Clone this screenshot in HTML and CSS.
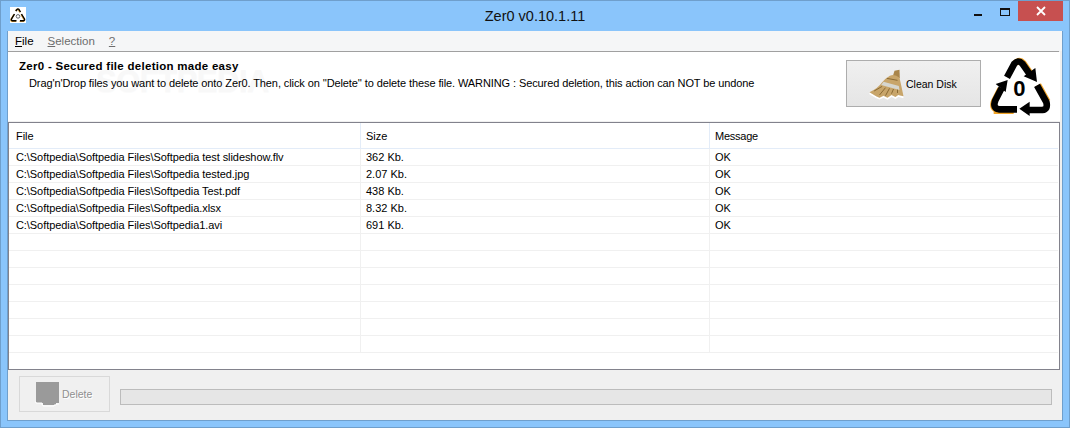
FILE: index.html
```html
<!DOCTYPE html>
<html lang="en">
<head>
<meta charset="utf-8">
<title>Zer0 v0.10.1.11</title>
<link rel="stylesheet" href="styles.css">
</head>
<body>
<div class="window">
  <div class="titlebar">
    <div class="title-left">
      <div class="app-icon">
        <svg width="16" height="16" viewBox="0 0 16 16">
          <path d="M6 3.5L7.2 2.2Q8 1.6 8.8 2.2L10.5 5M11.5 7L14.5 12Q15 13.6 13.5 13.8H10M6.5 13.8H2.5Q1 13.6 1.5 12L4.5 7" fill="none" stroke="#d89a30" stroke-width="1.6" transform="translate(-.4 .4)"/>
          <path d="M5.8 4L7.2 2.2Q8 1.6 8.8 2.2L10.5 5M11.5 7L14.5 12Q15 13.6 13.5 13.8H10M6.5 13.8H2.5Q1 13.6 1.5 12L4.5 7" fill="none" stroke="#000" stroke-width="1.4"/>
          <circle cx="8" cy="9.4" r="1.8" fill="none" stroke="#666" stroke-width="1"/>
        </svg>
      </div>
    </div>
    <div class="title">Zer0 v0.10.1.11</div>
    <div class="controls">
      <div class="ctl"><span class="min-glyph"></span></div>
      <div class="ctl"><span class="max-glyph"></span></div>
      <div class="ctl-close">
        <svg width="10" height="10" viewBox="0 0 10 10"><path d="M1 1L9 9M9 1L1 9" stroke="#fff" stroke-width="1.8"/></svg>
      </div>
    </div>
  </div>
  <div class="client">
    <div class="menubar">
      <span class="menu"><u>F</u>ile</span>
      <span class="menu disabled"><u>S</u>election</span>
      <span class="menu disabled"><u>?</u></span>
    </div>
    <div class="menu-line"></div>
    <div class="header">
      <div class="watermark">SOFTPEDIA</div>
      <div class="header-text">
        <div class="h-title">Zer0 - Secured file deletion made easy</div>
        <div class="h-sub">Drag'n'Drop files you want to delete onto Zer0. Then, click on ''Delete'' to delete these file. WARNING : Secured deletion, this action can NOT be undone</div>
      </div>
      <div class="clean-btn">
        <svg class="broom" width="37" height="32" viewBox="10 15 110 96">
          <path d="M14 91L34 103L44 107L56 101L68 107L80 99L92 105L100 99L116 103" fill="none" stroke="#fff" stroke-width="5"/>
          <path d="M84 40L89 23L104 20L105 46Z" fill="#a9854a"/>
          <path d="M75 38Q90 32 104 44Q110 70 116 100L100 96L92 102L80 96L68 104L56 98L44 104L34 100L14 88Q40 75 50 60Q62 45 75 38Z" fill="#c8a56a"/>
          <path d="M56 56L102 69L104 81L49 66Z" fill="#d6d6cf"/>
          <path d="M66 46L98 52M28 84L52 70M44 96L62 74M62 98L74 76M80 92L86 78M98 90L98 80" stroke="#8a6a34" stroke-width="3" fill="none"/>
        </svg>
        <span>Clean Disk</span>
      </div>
      <svg class="logo" width="72" height="68" viewBox="0 0 216 204">
        <g fill="none" stroke="#f0a428" stroke-width="20">
          <path d="M28 172H88" transform="translate(-2 4)"/>
          <path d="M42 170Q22 168 31 145L50 108" transform="translate(-3 2)"/>
          <path d="M88 35Q100 22 112 35L136 70" transform="translate(3 -1)"/>
          <path d="M156 100L184 150" transform="translate(3 -1)"/>
        </g>
        <g fill="none" stroke="#000" stroke-width="20">
          <path d="M66 76L88 35Q100 22 112 35L135 68"/>
          <path d="M156 100L184 150Q190 172 172 174H128"/>
          <path d="M96 172H42Q22 168 31 145L50 108"/>
        </g>
        <path d="M116 73L156 90L151 48Z M103 170L134 149V192Z M68 84L32 96L62 120Z" fill="#000"/>
        <text x="103" y="133" class="logo-zero">0</text>
      </svg>
    </div>
    <div class="table">
      <div class="row head"><div class="c1">File</div><div class="c2">Size</div><div class="c3">Message</div></div>
      <div class="row"><div class="c1">C:\Softpedia\Softpedia Files\Softpedia test slideshow.flv</div><div class="c2">362 Kb.</div><div class="c3">OK</div></div>
      <div class="row"><div class="c1">C:\Softpedia\Softpedia Files\Softpedia tested.jpg</div><div class="c2">2.07 Kb.</div><div class="c3">OK</div></div>
      <div class="row"><div class="c1">C:\Softpedia\Softpedia Files\Softpedia Test.pdf</div><div class="c2">438 Kb.</div><div class="c3">OK</div></div>
      <div class="row"><div class="c1">C:\Softpedia\Softpedia Files\Softpedia.xlsx</div><div class="c2">8.32 Kb.</div><div class="c3">OK</div></div>
      <div class="row"><div class="c1">C:\Softpedia\Softpedia Files\Softpedia1.avi</div><div class="c2">691 Kb.</div><div class="c3">OK</div></div>
      <div class="row"><div class="c1"></div><div class="c2"></div><div class="c3"></div></div>
      <div class="row"><div class="c1"></div><div class="c2"></div><div class="c3"></div></div>
      <div class="row"><div class="c1"></div><div class="c2"></div><div class="c3"></div></div>
      <div class="row"><div class="c1"></div><div class="c2"></div><div class="c3"></div></div>
      <div class="row"><div class="c1"></div><div class="c2"></div><div class="c3"></div></div>
      <div class="row"><div class="c1"></div><div class="c2"></div><div class="c3"></div></div>
      <div class="row"><div class="c1"></div><div class="c2"></div><div class="c3"></div></div>
    </div>
    <div class="footer">
      <div class="del-btn">
        <svg width="24" height="25" viewBox="0 0 24 25"><path d="M1 0H24V21H21V23H8V21H1Z" fill="#9a9a9a"/><path d="M0 20H1V21H7V23H8V24H19V23H21V22H24" fill="none" stroke="#fff"/></svg>
        <span>Delete</span>
      </div>
      <div class="progress"></div>
    </div>
  </div>
</div>
</body>
</html>
```
FILE: styles.css
```css
html, body { margin: 0; padding: 0; }
body { width: 1070px; height: 428px; overflow: hidden; font-family: "Liberation Sans", Arial, sans-serif; font-size: 11px; color: #000; }
.window { box-sizing: border-box; width: 1070px; height: 428px; background: #8ac5fb; border: 1px solid #6f9fcc; display: flex; flex-direction: column; }
.titlebar { height: 30px; flex: none; display: grid; grid-template-columns: 1fr auto 1fr; align-items: start; }
.title-left { display: flex; }
.app-icon { width: 16px; height: 16px; margin: 6px 0 0 9px; background: #fff; }
.title { font-size: 14.5px; line-height: 30px; color: #111; }
.controls { display: flex; justify-content: flex-end; margin-right: 6px; }
.ctl { width: 26px; height: 20px; display: flex; align-items: center; justify-content: center; }
.min-glyph { width: 8px; height: 2px; background: #111; margin: 7px 2px 0 0; }
.max-glyph { box-sizing: border-box; width: 10px; height: 8px; border: 1px solid #111; border-top-width: 2px; margin-top: 1px; }
.ctl-close { width: 45px; height: 20px; background: #c75050; display: flex; align-items: center; justify-content: center; }
.client { flex: 1; margin: 0 6px 6px; background: #f0f0f0; border-left: 1px solid #6f9fcc; border-right: 1px solid #6f9fcc; border-bottom: 1px solid #6f9fcc; display: flex; flex-direction: column; min-height: 0; background-clip: padding-box; }
.menubar { height: 20px; flex: none; background: #f5f6f7; display: flex; align-items: center; padding-left: 7px; gap: 14px; font-size: 11.5px; }
.menu-line { height: 1px; flex: none; background: #a0a0a0; margin-right: 3px; }
.menu.disabled { color: #6d6d6d; }
.header { height: 69px; flex: none; background: #fff; display: flex; position: relative; border-bottom: 1px solid #f0f0f0; margin-right: 2px; }
.watermark { position: absolute; left: 88px; top: 12px; font-size: 31px; font-weight: bold; color: #f8f8f8; letter-spacing: -0.5px; text-shadow: 0 1px 0 #fbfbfb; }
.header-text { flex: 1; padding: 7px 0 0 11px; position: relative; }
.h-title { font-weight: bold; font-size: 11.5px; letter-spacing: 0.28px; line-height: 15px; }
.h-sub { padding-left: 10px; line-height: 17px; margin-top: 1px; letter-spacing: -0.1px; }
.clean-btn { box-sizing: border-box; width: 135px; height: 47px; margin: 8px 4px 0 0; background: linear-gradient(#f0f0f0, #e5e5e5); border: 1px solid #adadad; display: flex; align-items: center; padding-left: 21px; gap: 1px; font-size: 10.5px; }
.logo { flex: none; margin-right: 3px; }
.logo-zero { font-family: "Liberation Sans", Arial, sans-serif; font-size: 66px; font-weight: bold; text-anchor: middle; fill: #000; }
.table { box-sizing: border-box; height: 248px; flex: none; background: #fff; border: 1px solid #82828c; display: flex; flex-direction: column; margin-right: 2px; }
.row { display: grid; grid-template-columns: 351px 349px 1fr; height: 17px; flex: none; box-sizing: border-box; border-bottom: 1px solid #f0f0f0; line-height: 17px; margin-right: 1px; }
.row > div { padding-left: 5px; }
.row > .c1 { padding-left: 7px; letter-spacing: -0.07px; }
.row > div + div { border-left: 1px solid #f0f0f0; }
.row.head { height: 26px; line-height: 27px; border-bottom-color: #e3ecf8; }
.row.head > div + div { border-left-color: #e3ecf8; }
.row.head > .c3 { letter-spacing: -0.25px; }
.footer { flex: 1; display: flex; align-items: flex-start; padding: 6px 10px 0 11px; gap: 10px; background: #f0f0f0; }
.del-btn { box-sizing: border-box; width: 91px; height: 36px; border: 1px solid #d9d9d9; display: flex; align-items: center; padding-left: 15px; gap: 3px; color: #8f8f8f; text-shadow: 1px 1px 0 #fff; font-size: 10.5px; }
.progress { flex: 1; height: 16px; margin-top: 13px; box-sizing: border-box; border: 1px solid #bcbcbc; background: #e6e6e6; }
```
